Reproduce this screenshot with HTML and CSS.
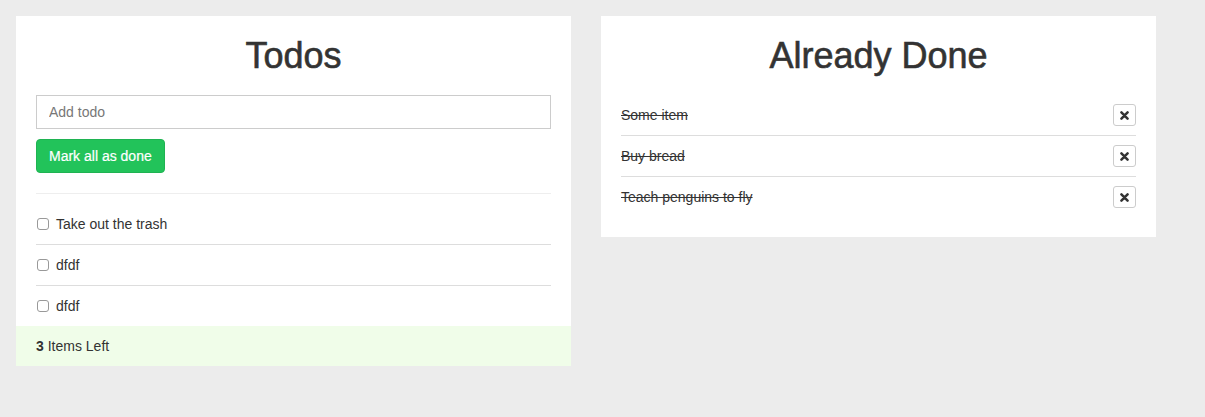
FILE: index.html
```html
<!DOCTYPE html>
<html>
<head>
<meta charset="utf-8">
<link rel="stylesheet" href="styles.css">
</head>
<body>
<div class="page">
  <section class="panel">
    <div class="panel-body">
      <h1>Todos</h1>
      <input class="add" type="text" placeholder="Add todo">
      <button class="btn-done">Mark all as done</button>
      <hr>
      <ul class="list">
        <li class="todo"><span class="check"></span>Take out the trash</li>
        <li class="todo"><span class="check"></span>dfdf</li>
        <li class="todo"><span class="check"></span>dfdf</li>
      </ul>
    </div>
    <div class="footer"><strong>3</strong> Items Left</div>
  </section>
  <section class="panel">
    <div class="panel-body pad-bottom">
      <h1>Already Done</h1>
      <ul class="list">
        <li class="done"><s>Some item</s><button class="remove"><svg width="9" height="9" viewBox="0 0 10 10"><path d="M1.6 1.6 L8.4 8.4 M8.4 1.6 L1.6 8.4" stroke="#333" stroke-width="2.8" stroke-linecap="round"/></svg></button></li>
        <li class="done"><s>Buy bread</s><button class="remove"><svg width="9" height="9" viewBox="0 0 10 10"><path d="M1.6 1.6 L8.4 8.4 M8.4 1.6 L1.6 8.4" stroke="#333" stroke-width="2.8" stroke-linecap="round"/></svg></button></li>
        <li class="done"><s>Teach penguins to fly</s><button class="remove"><svg width="9" height="9" viewBox="0 0 10 10"><path d="M1.6 1.6 L8.4 8.4 M8.4 1.6 L1.6 8.4" stroke="#333" stroke-width="2.8" stroke-linecap="round"/></svg></button></li>
      </ul>
    </div>
  </section>
</div>
</body>
</html>
```

FILE: styles.css
```css
* { box-sizing: border-box; }
html, body { margin: 0; padding: 0; }
body {
  background: #ececec;
  font-family: "Liberation Sans", Arial, sans-serif;
  font-size: 14px;
  line-height: 20px;
  color: #333;
}
.page {
  display: flex;
  align-items: flex-start;
  gap: 30px;
  padding: 16px;
}
.panel {
  width: 555px;
  background: #fff;
}
.panel-body {
  padding: 0 20px;
}
.pad-bottom { padding-bottom: 20px; }
h1 {
  margin: 20px 0;
  font-size: 36px;
  line-height: 39px;
  font-weight: 400;
  -webkit-text-stroke: 0.6px #333;
  text-align: center;
  color: #333;
}
.add {
  display: block;
  width: 100%;
  height: 34px;
  margin: 0;
  padding: 6px 12px;
  border: 1px solid #ccc;
  border-radius: 0;
  font: 14px/20px "Liberation Sans", Arial, sans-serif;
  color: #333;
  outline: none;
}
.add::placeholder { color: #777; }
.btn-done {
  display: block;
  margin-top: 10px;
  height: 34px;
  padding: 6px 12px;
  background: #22c35a;
  border: 1px solid #1fb352;
  border-radius: 4px;
  color: #fff;
  font: 14px/20px "Liberation Sans", Arial, sans-serif;
  -webkit-text-stroke: 0.2px #fff;
}
hr {
  margin: 20px 0 10px;
  border: 0;
  border-top: 1px solid #eee;
}
.list {
  list-style: none;
  margin: 0;
  padding: 0;
}
.list li {
  display: flex;
  align-items: center;
  padding: 10px 0;
  border-bottom: 1px solid #ddd;
}
.list li:last-child { border-bottom: 0; }
.check {
  width: 12px;
  height: 12px;
  margin: 0 7px 0 1px;
  border: 1px solid #999;
  border-radius: 3px;
  background: #fff;
}
.done s {
  flex: 1;
  text-decoration: line-through;
}
.done {
  height: 41px;
}
.done:last-child { height: 40px; }
.remove {
  width: 23px;
  height: 22px;
  padding: 0;
  border: 1px solid #ccc;
  border-radius: 3px;
  background: #fff;
  display: flex;
  align-items: center;
  justify-content: center;
}
.footer {
  padding: 10px 20px;
  background: #f0fde9;
}
.footer strong { font-weight: 700; }
```
